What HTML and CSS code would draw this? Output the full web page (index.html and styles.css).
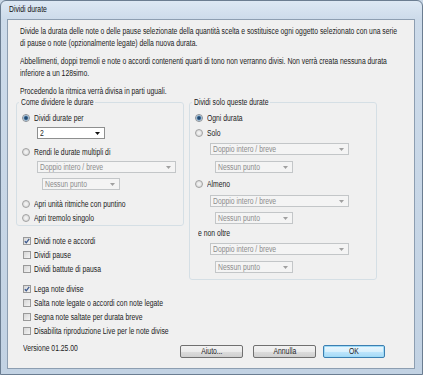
FILE: index.html
```html
<!DOCTYPE html>
<html lang="it">
<head>
    <meta charset="UTF-8">
    <meta name="viewport" content="width=device-width, initial-scale=1.0">
    <title>Dividi durate</title>
    <link rel="stylesheet" href="styles.css">
</head>
<body>
    <div class="window">
        <div class="titlebar"><span class="t">Dividi durate</span></div>
        <div class="client">
            <div class="intro">
                <p>Divide la durata delle note o delle pause selezionate della quantità scelta e sostituisce ogni oggetto selezionato con una serie<br>di pause o note (opzionalmente legate) della nuova durata.</p>
                <p>Abbellimenti, doppi tremoli e note o accordi contenenti quarti di tono non verranno divisi. Non verrà creata nessuna durata<br>inferiore a un 128simo.</p>
                <p>Procedendo la ritmica verrà divisa in parti uguali.</p>
            </div>

            <div class="columns">
                <div class="col-left">
                    <fieldset class="group group-left">
                        <legend><span class="t">Come dividere le durare</span></legend>
                        <div class="opt"><span class="radio checked"></span><span class="t">Dividi durate per</span></div>
                        <div class="select sel-num"><span class="t">2</span><svg width="5" height="3" viewBox="0 0 5 3"><polygon points="0,0 5,0 2.5,3" fill="#111"/></svg></div>
                        <div class="opt opt-2"><span class="radio"></span><span class="t">Rendi le durate multipli di</span></div>
                        <div class="select sel-wide disabled"><span class="t">Doppio intero / breve</span><svg width="5" height="3" viewBox="0 0 5 3"><polygon points="0,0 5,0 2.5,3" fill="#a0a0a0"/></svg></div>
                        <div class="select sel-dot disabled"><span class="t">Nessun punto</span><svg width="5" height="3" viewBox="0 0 5 3"><polygon points="0,0 5,0 2.5,3" fill="#a0a0a0"/></svg></div>
                        <div class="opt opt-3"><span class="radio"></span><span class="t">Apri unità ritmiche con puntino</span></div>
                        <div class="opt opt-4"><span class="radio"></span><span class="t">Apri tremolo singolo</span></div>
                    </fieldset>

                    <div class="checks checks-1">
                        <div class="check"><span class="box checked"><svg width="6" height="6" viewBox="0 0 6 6"><path d="M0.8 3.2 L2.3 4.8 L5.2 0.9" fill="none" stroke="#3d5a8f" stroke-width="1.3"/></svg></span><span class="t">Dividi note e accordi</span></div>
                        <div class="check"><span class="box"></span><span class="t">Dividi pause</span></div>
                        <div class="check"><span class="box"></span><span class="t">Dividi battute di pausa</span></div>
                    </div>
                    <div class="checks checks-2">
                        <div class="check"><span class="box checked"><svg width="6" height="6" viewBox="0 0 6 6"><path d="M0.8 3.2 L2.3 4.8 L5.2 0.9" fill="none" stroke="#3d5a8f" stroke-width="1.3"/></svg></span><span class="t">Lega note divise</span></div>
                        <div class="check"><span class="box"></span><span class="t">Salta note legate o accordi con note legate</span></div>
                        <div class="check"><span class="box"></span><span class="t">Segna note saltate per durata breve</span></div>
                        <div class="check"><span class="box"></span><span class="t">Disabilita riproduzione Live per le note divise</span></div>
                    </div>
                </div>

                <fieldset class="group group-right">
                    <legend><span class="t">Dividi solo queste durate</span></legend>
                    <div class="opt"><span class="radio checked"></span><span class="t">Ogni durata</span></div>
                    <div class="opt r-solo"><span class="radio"></span><span class="t">Solo</span></div>
                    <div class="select sel-wide disabled r-sel"><span class="t">Doppio intero / breve</span><svg width="5" height="3" viewBox="0 0 5 3"><polygon points="0,0 5,0 2.5,3" fill="#a0a0a0"/></svg></div>
                    <div class="select sel-dot disabled r-dot"><span class="t">Nessun punto</span><svg width="5" height="3" viewBox="0 0 5 3"><polygon points="0,0 5,0 2.5,3" fill="#a0a0a0"/></svg></div>
                    <div class="opt r-almeno"><span class="radio"></span><span class="t">Almeno</span></div>
                    <div class="select sel-wide disabled r-sel2"><span class="t">Doppio intero / breve</span><svg width="5" height="3" viewBox="0 0 5 3"><polygon points="0,0 5,0 2.5,3" fill="#a0a0a0"/></svg></div>
                    <div class="select sel-dot disabled r-dot2"><span class="t">Nessun punto</span><svg width="5" height="3" viewBox="0 0 5 3"><polygon points="0,0 5,0 2.5,3" fill="#a0a0a0"/></svg></div>
                    <div class="label-oltre"><span class="t">e non oltre</span></div>
                    <div class="select sel-wide disabled r-sel"><span class="t">Doppio intero / breve</span><svg width="5" height="3" viewBox="0 0 5 3"><polygon points="0,0 5,0 2.5,3" fill="#a0a0a0"/></svg></div>
                    <div class="select sel-dot disabled r-dot"><span class="t">Nessun punto</span><svg width="5" height="3" viewBox="0 0 5 3"><polygon points="0,0 5,0 2.5,3" fill="#a0a0a0"/></svg></div>
                </fieldset>
            </div>

            <div class="footer">
                <span class="version"><span class="t">Versione 01.25.00</span></span>
                <div class="buttons">
                    <button class="btn"><span class="t">Aiuto...</span></button>
                    <button class="btn btn-cancel"><span class="t">Annulla</span></button>
                    <button class="btn btn-ok"><span class="t">OK</span></button>
                </div>
            </div>
        </div>
    </div>
</body>
</html>
```

FILE: styles.css
```css
/* finestra di dialogo stile Windows 7 */
* {
    margin: 0;
    padding: 0;
    box-sizing: border-box;
}

body {
    font-family: "Liberation Sans", Arial, sans-serif;
    font-size: 8.3px;
    color: #1b1b1b;
    background: #c9d7e6;
    overflow: hidden;
}

/* il font di sistema e' stretto: comprimo il testo in orizzontale */
.t {
    display: inline-block;
    transform: scaleX(0.82);
    transform-origin: 0 50%;
}

.window {
    width: 423px;
    height: 375px;
    border: 1px solid #6b7d91;
    border-radius: 6px 6px 0 0;
    padding: 0 7px 5px 6px;
    background: linear-gradient(180deg, #dde8f3 0, #cddbea 18px, #c2d2e3 100%);
    overflow: hidden;
}

.titlebar {
    height: 18px;
    line-height: 17px;
    padding-left: 2px;
    color: #111;
}

.client {
    height: 350px;
    border: 1px solid #8d9eb1;
    background: #f0f0f0;
    padding-top: 5px;
    overflow: hidden;
}

.intro {
    display: flex;
    flex-direction: column;
    gap: 6px;
    padding-left: 12px;
    line-height: 12px;
    white-space: nowrap;
}

.intro p {
    transform: scaleX(0.82);
    transform-origin: 0 50%;
}

.columns {
    display: grid;
    grid-template-columns: 168px 188px;
    column-gap: 5px;
    align-items: start;
    padding-left: 8px;
    margin-top: -1px;
}

/* group box */
.group {
    border: 1px solid #d5dfe5;
    border-radius: 3px;
    padding: 4px 0 1px 0;
    min-inline-size: 0;
}

.group legend {
    line-height: 12px;
    padding: 0 2px;
    margin-left: 2px;
    white-space: nowrap;
}

.group legend .t {
    margin-right: -17px;
}

.group-right {
    padding-bottom: 6px;
}

.opt {
    display: flex;
    align-items: center;
    height: 12px;
    padding-left: 5px;
    gap: 4px;
    white-space: nowrap;
}

.radio {
    width: 8px;
    height: 8px;
    border-radius: 50%;
    border: 1px solid #a2a2a2;
    background: radial-gradient(circle, #f8f8f8 0, #e6e6e6 2px, #cfcfcf 4px);
    flex-shrink: 0;
}

.radio.checked {
    border-color: #8a8f96;
    background: radial-gradient(circle, #1d3a5a 0, #2a5680 1.4px, #8fb6d6 2.4px, #dfe6ec 3px);
}

.opt-2 { margin-top: 7px; }
.opt-3 { margin-top: 8px; }
.opt-4 { margin-top: 2px; }

/* combo */
.select {
    display: flex;
    align-items: center;
    justify-content: space-between;
    height: 12px;
    margin-left: 20px;
    padding: 0 4px 0 2px;
    border: 1px solid #8e8f8f;
    background: #fff;
    white-space: nowrap;
}

.select.disabled {
    border-color: #c3c6c8;
    background: #f4f4f4;
    color: #8c8c8c;
}

.sel-num {
    width: 68px;
    margin-top: 3px;
}

.sel-wide {
    width: 139px;
    margin-top: 3px;
}

.sel-dot {
    width: 78px;
    margin-left: 25px;
    margin-top: 5px;
}

.r-solo { margin-top: 3px; }
.r-sel { margin-top: 4px; }
.r-dot { margin-top: 6px; }
.r-almeno { margin-top: 5px; }
.r-sel2 { margin-top: 5px; }
.r-dot2 { margin-top: 5px; }

.label-oltre {
    margin-top: 3px;
    margin-left: 8px;
    line-height: 12px;
}

/* caselle */
.checks {
    display: flex;
    flex-direction: column;
    gap: 2px;
}

.checks-1 { margin-top: 9px; }
.checks-2 { margin-top: 8px; }

.check {
    display: flex;
    align-items: center;
    gap: 3px;
    height: 12px;
    margin-left: 7px;
    white-space: nowrap;
}

.box {
    width: 8px;
    height: 8px;
    border: 1px solid #999;
    background: linear-gradient(135deg, #d6d6d6, #f4f4f4);
    display: flex;
    align-items: center;
    justify-content: center;
    flex-shrink: 0;
}

.footer {
    display: flex;
    align-items: flex-start;
    margin-top: 5px;
    padding-right: 29px;
}

.version {
    margin-left: 15px;
    line-height: 12px;
}

.buttons {
    display: flex;
    margin-left: auto;
    margin-top: 3px;
}

.btn {
    width: 63px;
    height: 13px;
    border: 1px solid #707070;
    border-radius: 2px;
    background: linear-gradient(180deg, #f2f2f2 0, #ebebeb 50%, #dddddd 51%, #cfcfcf 100%);
    font: inherit;
    color: #1b1b1b;
    line-height: 11px;
}

.btn .t {
    transform-origin: 50% 50%;
}

.btn-cancel { margin-left: 10px; }

.btn-ok {
    width: 62px;
    margin-left: 7px;
    border-color: #3c7fb1;
    background: linear-gradient(180deg, #eaf6fd 0, #d9f0fc 50%, #bee6fd 51%, #a7d9f5 100%);
    box-shadow: inset 0 0 0 1px #9fdbf7;
}
```
